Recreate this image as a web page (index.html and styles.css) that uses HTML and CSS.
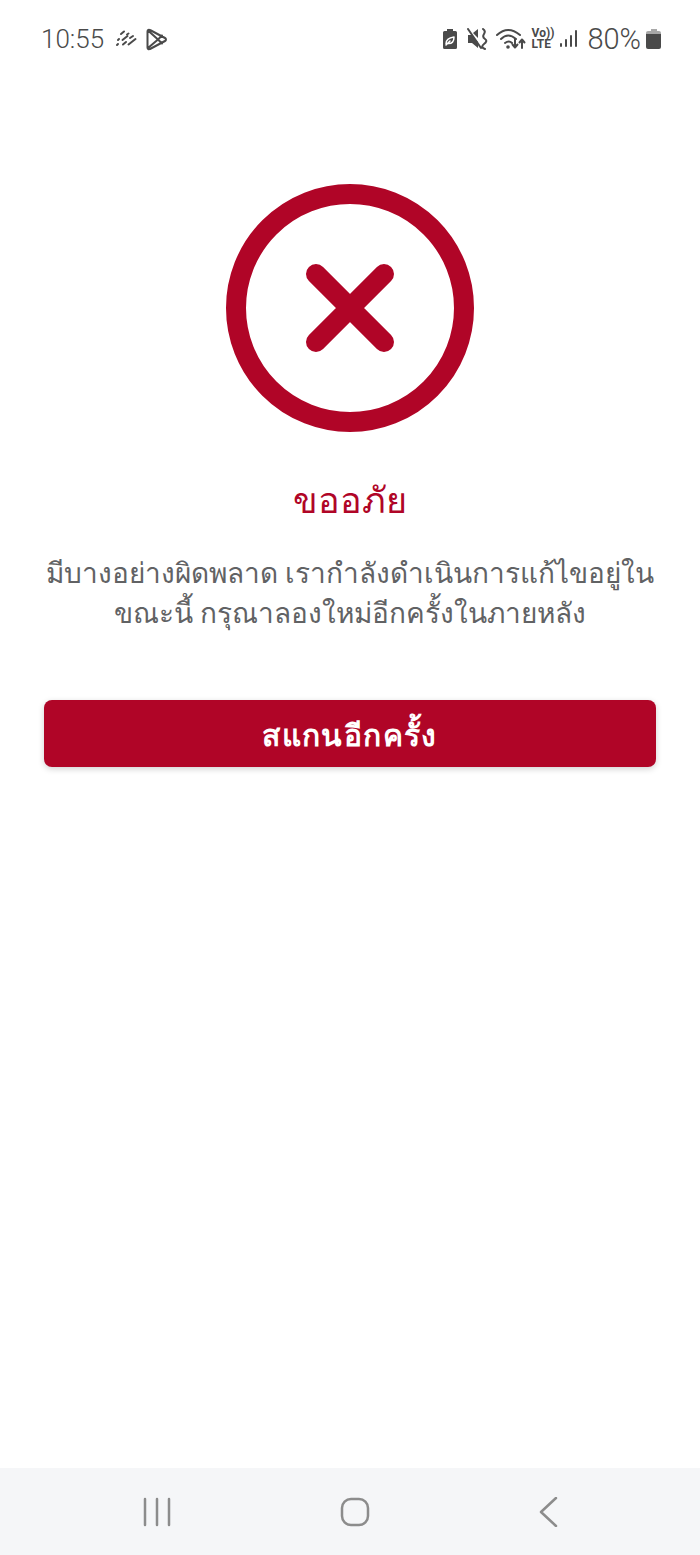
FILE: index.html
```html
<!DOCTYPE html>
<html lang="th">
<head>
    <meta charset="UTF-8">
    <meta name="viewport" content="width=device-width, initial-scale=1.0">
    <title>ขออภัย</title>
    <link rel="stylesheet" href="styles.css">
</head>
<body>
    <div class="status-bar">
        <div class="status-left">
            <span class="clock">10:55</span>
            <svg class="icon-rain" width="24" height="20" viewBox="0 0 24 20">
                <path d="M6 5l3-2.500M12 5.500l1.500-1M3 11l1-1M7.500 11l5-4M15 9l3-2M2 16l1-1M8 15.500l3-2.500M13.500 15.500l7-5.500"/>
            </svg>
            <svg class="icon-play" width="24" height="24" viewBox="0 0 24 24">
                <path d="M3.500 4.500c0-1.500 1.300-2.200 2.500-1.500l15 8c1.300.7 1.300 2.300 0 3l-15 8c-1.200.7-2.500 0-2.500-1.500zM4 3.500l10 9-10 8.500M14 12.500l4-4M14 12.500l4 4"/>
            </svg>
        </div>
        <div class="status-right">
            <svg class="icon-eco" width="16" height="22" viewBox="0 0 16 22">
                <path class="solid" d="M5 1h6v2h2.500q1.500 0 1.500 1.500v15q0 1.500-1.500 1.500h-11q-1.500 0-1.500-1.500v-15q0-1.500 1.500-1.500h2.500z"/>
                <path class="leaf" d="M4 16q0-6 8-7 0 7-6 6.500M4 17l4-4"/>
            </svg>
            <svg class="icon-mute" width="22" height="22" viewBox="0 0 22 22">
                <path class="solid" d="M1 7h3l1 0 6 7v6l-6-5h-4zM6 5l5-4v9z"/>
                <path d="M1 1l13 19M16 1q3 2 1 5t1 5-1 5 1 5"/>
            </svg>
            <svg class="icon-wifi" width="30" height="24" viewBox="0 0 30 24">
                <path d="M1 8q11-10 23 0M5 12q7-7 15 0M9 16q4-3 7 0"/>
                <circle class="solid" cx="12" cy="20" r="1.800"/>
                <path d="M19 12v8M16.500 17.500l2.500 3 2.500-3M26 21v-8M23.500 15.500l2.500-3 2.500 3"/>
            </svg>
            <div class="volte">
                <span>Vo))</span>
                <span>LTE</span>
            </div>
            <svg class="icon-signal" width="20" height="20" viewBox="0 0 20 20">
                <path d="M2 17v-2M7 17v-6M12 17v-10M17 17v-15"/>
            </svg>
            <span class="battery-text">80%</span>
            <div class="battery">
                <div class="battery-cap"></div>
                <div class="battery-body"></div>
            </div>
        </div>
    </div>

    <main class="content">
        <svg class="error-icon" width="248" height="248" viewBox="0 0 248 248">
            <circle cx="124" cy="124" r="114"/>
            <path d="M90 90l68 68M158 90l-68 68"/>
        </svg>
        <h1>ขออภัย</h1>
        <p>มีบางอย่างผิดพลาด เรากำลังดำเนินการแก้ไขอยู่ใน<br>ขณะนี้ กรุณาลองใหม่อีกครั้งในภายหลัง</p>
        <button type="button">สแกนอีกครั้ง</button>
    </main>

    <nav class="nav-bar">
        <svg width="30" height="30" viewBox="0 0 30 30">
            <path d="M2 2v26M14 2v26M26 2v26"/>
        </svg>
        <svg width="30" height="30" viewBox="0 0 30 30">
            <rect x="2" y="2" width="26" height="26" rx="9"/>
        </svg>
        <svg width="30" height="30" viewBox="0 0 30 30">
            <path d="M20 1l-15 14 15 14"/>
        </svg>
    </nav>
</body>
</html>
```

FILE: styles.css
```css
:root {
    --primary-color: #b00527;
    --text-color: #616264;
    --status-color: #4a4a4a;
    --nav-background: #f5f6f8;
    --nav-color: #8c8c8c;
}

* {
    box-sizing: border-box;
    margin: 0;
    padding: 0;
}

body {
    font-family: 'Noto Sans', 'Liberation Sans', 'DejaVu Sans', sans-serif;
    background-color: #ffffff;
    color: var(--text-color);
    display: flex;
    flex-direction: column;
    min-height: 100vh;
}

.status-bar {
    display: flex;
    justify-content: space-between;
    align-items: center;
    height: 78px;
    padding: 0 39px 0 41px;
    color: var(--status-color);
}

.status-left,
.status-right {
    display: flex;
    align-items: center;
}

.clock {
    font-family: 'Roboto', sans-serif;
    font-size: 26px;
    font-weight: 300;
    margin-right: 11px;
}

.status-bar svg {
    fill: none;
    stroke: var(--status-color);
    stroke-width: 2;
    stroke-linecap: round;
    stroke-linejoin: round;
}

.status-bar svg .solid {
    fill: var(--status-color);
    stroke: none;
}

.status-bar svg .leaf {
    stroke: #ffffff;
    stroke-width: 1.5;
}

.icon-rain {
    margin-right: 5px;
}

.icon-eco {
    margin-right: 9px;
}

.icon-mute {
    margin-right: 7px;
}

.icon-wifi {
    margin-right: 6px;
}

.volte {
    display: flex;
    flex-direction: column;
    font-family: 'Roboto', sans-serif;
    font-size: 12px;
    font-weight: 700;
    line-height: 11px;
    margin-right: 5px;
}

.icon-signal {
    margin-right: 8px;
}

.battery-text {
    font-family: 'Roboto', sans-serif;
    font-size: 29px;
    font-weight: 300;
    margin-right: 5px;
}

.battery {
    display: flex;
    flex-direction: column;
    align-items: center;
}

.battery-cap {
    width: 6px;
    height: 2px;
    background-color: #a8a8a8;
}

.battery-body {
    width: 15px;
    height: 18px;
    border-radius: 2px;
    background: linear-gradient(#a8a8a8 15%, var(--status-color) 15%);
}

.content {
    flex: 1;
    display: flex;
    flex-direction: column;
    align-items: center;
    padding: 106px 44px 0;
}

.error-icon {
    fill: none;
    stroke: var(--primary-color);
    stroke-linecap: round;
}

.error-icon circle,
.error-icon path {
    stroke-width: 20;
}

h1 {
    color: var(--primary-color);
    font-size: 36px;
    font-weight: 400;
    line-height: 44px;
    margin-top: 46px;
}

p {
    font-size: 28px;
    font-weight: 300;
    line-height: 40px;
    text-align: center;
    margin-top: 30px;
    white-space: nowrap;
}

button {
    width: 100%;
    height: 67px;
    margin-top: 68px;
    padding-top: 3px;
    background-color: var(--primary-color);
    color: #ffffff;
    border: none;
    border-radius: 8px;
    box-shadow: 0 2px 6px rgba(0, 0, 0, 0.18);
    font-family: inherit;
    font-size: 30px;
    font-weight: 600;
    letter-spacing: 1.400px;
}

.nav-bar {
    display: flex;
    justify-content: space-between;
    align-items: center;
    height: 87px;
    padding: 0 134px 0 143px;
    background-color: var(--nav-background);
}

.nav-bar svg {
    fill: none;
    stroke: var(--nav-color);
    stroke-width: 2.500;
    stroke-linecap: round;
    stroke-linejoin: round;
}
```
